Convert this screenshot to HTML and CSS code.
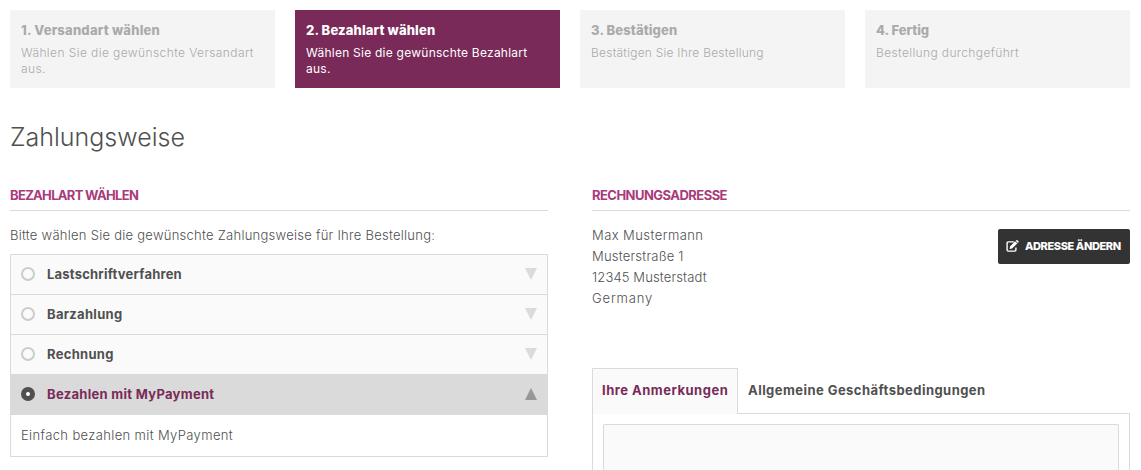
FILE: index.html
```html
<!DOCTYPE html>
<html lang="de">
<head>
<meta charset="utf-8">
<title>Zahlungsweise</title>
<link rel="stylesheet" href="styles.css">
</head>
<body>
<ol class="steps">
  <li class="step step-shipping"><div class="step-title">1. Versandart wählen</div><div class="step-text">Wählen Sie die gewünschte Versandart aus.</div></li>
  <li class="step step-payment active"><div class="step-title">2. Bezahlart wählen</div><div class="step-text">Wählen Sie die gewünschte Bezahlart aus.</div></li>
  <li class="step step-confirm"><div class="step-title">3. Bestätigen</div><div class="step-text">Bestätigen Sie Ihre Bestellung</div></li>
  <li class="step step-done"><div class="step-title">4. Fertig</div><div class="step-text">Bestellung durchgeführt</div></li>
</ol>
<h1 class="page-title">Zahlungsweise</h1>
<main class="columns">
  <section>
    <h2 class="section-title">Bezahlart wählen</h2>
    <p class="intro">Bitte wählen Sie die gewünschte Zahlungsweise für Ihre Bestellung:</p>
    <div class="payments">
      <div class="payment debit"><i class="radio"></i><span>Lastschriftverfahren</span><svg class="arrow" viewBox="0 0 12 12"><path d="M0 0H12L6 12Z"/></svg></div>
      <div class="payment"><i class="radio"></i><span>Barzahlung</span><svg class="arrow" viewBox="0 0 12 12"><path d="M0 0H12L6 12Z"/></svg></div>
      <div class="payment"><i class="radio"></i><span>Rechnung</span><svg class="arrow" viewBox="0 0 12 12"><path d="M0 0H12L6 12Z"/></svg></div>
      <div class="payment selected"><i class="radio"></i><span>Bezahlen mit MyPayment</span><svg class="arrow" viewBox="0 0 12 12"><path d="M0 12H12L6 0Z"/></svg></div>
      <div class="payment-info">Einfach bezahlen mit MyPayment</div>
    </div>
  </section>
  <section>
    <h2 class="section-title billing-title">Rechnungsadresse</h2>
    <div class="billing">
      <address class="address"><span class="name">Max Mustermann</span><span class="street">Musterstraße 1</span><span class="city">12345 Musterstadt</span><span class="country">Germany</span></address>
      <button class="edit" type="button"><svg class="edit-icon" viewBox="0 0 13 12"><path d="M7.8 1.9H2.2Q1.1 1.9 1.1 3V10Q1.1 11.1 2.2 11.1H8.8Q9.9 11.1 9.9 10V7.6" fill="none" stroke="#fff" stroke-width="1.4"/><path d="M3.6 8.9L4 6.4L9.1 1.3L11.3 3.5L6.1 8.6Z M9.7 .8L10.4.2Q10.9-.2 11.4.2L12.5 1.3Q13 1.8 12.5 2.3L11.8 3Z" fill="#fff"/></svg><span>Adresse ändern</span></button>
    </div>
    <div class="tabs"><div class="tab current">Ihre Anmerkungen</div><div class="tab">Allgemeine Geschäftsbedingungen</div></div>
    <div class="panel"><textarea class="notes" aria-label="Ihre Anmerkungen"></textarea></div>
  </section>
</main>
</body>
</html>
```
FILE: styles.css
```css
* { box-sizing: border-box; }
body { margin: 0; padding: 10px 11px 0 10px; background: #fff; color: #505050; font: 300 13px/21px Inter, "Open Sans", sans-serif; }
.steps { display: grid; grid-template-columns: repeat(4, 265px); gap: 20px; margin: 0; padding: 0; list-style: none; }
.step { height: 78px; padding: 11px 11px 0; background: #f4f4f4; color: #aaa; }
.step.active { background: #792a58; color: #fff; }
.step-title { font-size: 13px; font-weight: 800; line-height: 18px; letter-spacing: .12px; }
.step-text { margin-top: 6px; font-size: 12px; line-height: 16px; }
.step-shipping .step-title { letter-spacing: .22px; }
.step-payment .step-title { letter-spacing: .15px; }
.step-done .step-title { letter-spacing: 0; }
.step-shipping .step-text { letter-spacing: .41px; }
.step-payment .step-text { letter-spacing: .24px; font-weight: 400; }
.step-confirm .step-text { letter-spacing: .23px; }
.step-done .step-text { letter-spacing: .37px; }
.page-title { margin: 31px 0 0; font-size: 25px; line-height: 36px; font-weight: 300; }
.columns { display: grid; grid-template-columns: 538px 538px; gap: 44px; margin-top: 30px; }
.section-title { margin: 0; height: 26px; border-bottom: 1px solid #dadada; color: #a93a7b; font-size: 13px; line-height: 21px; font-weight: 700; letter-spacing: -.68px; text-transform: uppercase; }
.billing-title { letter-spacing: -.54px; }
.intro { margin: 14px 0 8px; letter-spacing: .26px; }
.payments { border: 1px solid #dadada; }
.payment { display: flex; align-items: center; height: 40px; padding: 0 10px; border-bottom: 1px solid #dadada; background: #fafafa; font-weight: 700; letter-spacing: .3px; }
.debit { letter-spacing: .21px; }
.radio { width: 14px; height: 14px; margin: 0 12px 2px 0; border: 2px solid #ccc; border-radius: 50%; }
.arrow { width: 12px; height: 12px; margin: 0 0 1px auto; fill: #dadada; }
.selected { background: #dadada; color: #792a58; }
.selected .radio { border: 5px solid #505050; background: #fff; }
.selected .arrow { fill: #999694; }
.payment-info { height: 41px; padding: 10px; letter-spacing: .37px; }
.billing { display: flex; justify-content: space-between; align-items: flex-start; height: 157px; padding-top: 14px; }
.address { display: flex; flex-direction: column; font-style: normal; }
.name { letter-spacing: .43px; }
.street { letter-spacing: .22px; }
.city { letter-spacing: .14px; }
.country { letter-spacing: .85px; }
.edit { display: flex; align-items: center; width: 132px; height: 35px; margin-top: 4px; padding: 0 0 1px 8px; border: 0; border-radius: 2px; background: #333; color: #fff; font: 800 11px/16px Inter, "Open Sans", sans-serif; letter-spacing: -.4px; text-transform: uppercase; white-space: nowrap; }
.edit-icon { width: 13px; height: 12px; margin-right: 6px; }
.tabs { display: flex; height: 45px; }
.tab { height: 45px; padding: 12px 10px; font-weight: 700; letter-spacing: .45px; white-space: nowrap; }
.tab.current { position: relative; width: 146px; height: 46px; padding: 11px 9px; border: 1px solid #dadada; border-bottom: 0; background: #fafafa; color: #792a58; letter-spacing: .5px; }
.panel { height: 57px; padding: 10px 10px 0; border: 1px solid #dadada; border-bottom: 0; }
.notes { display: block; width: 100%; height: 46px; border: 1px solid #dadada; border-bottom: 0; border-radius: 2px 2px 0 0; background: #fafafa; resize: none; }
```
